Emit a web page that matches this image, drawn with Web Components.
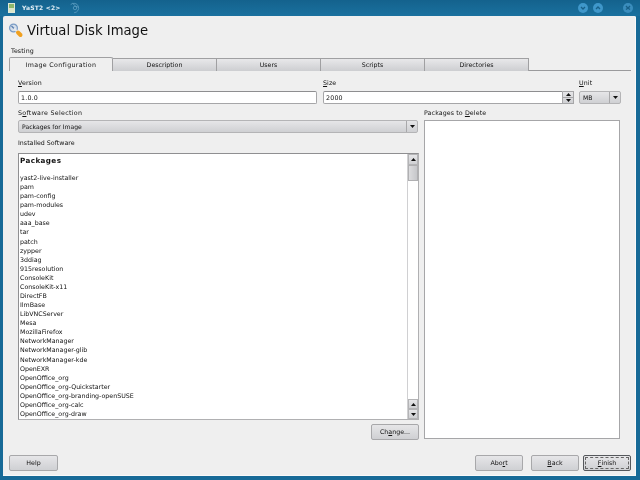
<!DOCTYPE html>
<html>
<head>
<meta charset="utf-8">
<title>YaST2</title>
<style>
html, body { margin: 0; padding: 0; width: 640px; height: 480px; overflow: hidden; background: #176a97; }
body { font-family: "DejaVu Sans", sans-serif; font-size: 6.3px; color: #222; }
u { text-underline-offset: 1px; }
.testing { margin: 1px 0 -1px 2px; }
</style>
</head>
<body>

<yast-window title="YaST2 <2>">
  <yast-heading>Virtual Disk Image</yast-heading>
  <yast-label class="testing">Testing</yast-label>
  <yast-tabs active="0" labels="Image Configuration|Description|Users|Scripts|Directories"></yast-tabs>
  <yast-form></yast-form>
  <yast-buttons></yast-buttons>
</yast-window>

<script>
const BTN_BG = 'linear-gradient(#e6e6e8, #cfd0d3)';

class YastLabel extends HTMLElement {
    constructor() {
        super();
        this.attachShadow({ mode: 'open' });
        this.shadowRoot.innerHTML = `
      <style>
        :host { display: block; font: 6.3px/9px "DejaVu Sans", sans-serif; color: #111; letter-spacing: .1px; white-space: nowrap; }
      </style>
      <slot></slot>`;
    }
}
customElements.define('yast-label', YastLabel);

class YastHeading extends HTMLElement {
    constructor() {
        super();
        this.attachShadow({ mode: 'open' });
        this.shadowRoot.innerHTML = `
      <style>
        :host { display: flex; align-items: center; gap: 3px; height: 20px; margin-bottom: 5px; font: 13.2px/20px "DejaVu Sans", sans-serif; color: #111; white-space: nowrap; }
        svg { flex: none; }
        span { padding-top: 2px; }
      </style>
      <svg width="15" height="15" viewBox="0 0 15 15">
        <circle cx="4.5" cy="5" r="3.9" fill="#d5dfea" stroke="#7a9cc6" stroke-width="1.2"/>
        <path d="M2.5 3 L5 5.5" stroke="#5f83b4" stroke-width="1.4"/>
        <path d="M5 5.5 L9 9.5" stroke="#e4e8ee" stroke-width="2"/>
        <path d="M9 9.5 L11.5 12" stroke="#f0a020" stroke-width="4" stroke-linecap="round"/>
      </svg>
      <span><slot></slot></span>`;
    }
}
customElements.define('yast-heading', YastHeading);

class YastWindow extends HTMLElement {
    constructor() {
        super();
        this.attachShadow({ mode: 'open' });
        this.shadowRoot.innerHTML = `
      <style>
        :host { display: flex; flex-direction: column; width: 640px; height: 480px; box-sizing: border-box; background: #176a97; padding: 0 4px 4px 3px; filter: blur(.3px); }
        .bar { flex: none; height: 16px; display: flex; align-items: center; color: #e4f0f7; font: bold 6px/16px "DejaVu Sans", sans-serif; letter-spacing: .2px; margin: 0 -4px 0 -3px; padding: 0 7px 0 8px; background: linear-gradient(#14628d, #1a719f); }
        .app { width: 7px; height: 10px; margin-right: 7px; background: linear-gradient(#8fb86c 45%, #dbe6c8 45%); border: 1px solid #dfe8d8; box-sizing: border-box; }
        .title { margin-right: 8px; }
        .pin { margin-top: -1px; }
        .sp { flex: 1; }
        .ctl { width: 10px; height: 10px; border-radius: 50%; background: #3f97ca; display: flex; align-items: center; justify-content: center; }
        .ctl svg { display: block; }
        .min { margin-right: 5px; }
        .max { margin-right: 20px; }
        .close { background: #3a8dbd; }
        .body { flex: 1; min-height: 0; background: #efefef; display: flex; flex-direction: column; box-sizing: border-box; padding: 4px 5px 5px 6px; border-radius: 2px 2px 0 0; border-bottom: 0; box-shadow: inset 0 -1px 0 #f9f9f9, inset -1px 0 0 #f9f9f9; }
      </style>
      <div class="bar">
        <span class="app"></span>
        <span class="title"></span>
        <svg class="pin" width="12" height="12" viewBox="0 0 14 14" fill="none" stroke="#5a9cc0" stroke-width="1"><path d="M2 3 A5.5 5.5 0 1 1 6 12.5"/><path d="M4 1.5 L8 5 L11 6"/><circle cx="7" cy="7" r="2"/></svg>
        <span class="sp"></span>
        <span class="ctl min"><svg width="6" height="6" viewBox="0 0 6 6"><path d="M1 2 L3 4 L5 2" fill="none" stroke="#175f88" stroke-width="1.3"/></svg></span>
        <span class="ctl max"><svg width="6" height="6" viewBox="0 0 6 6"><path d="M1 4 L3 2 L5 4" fill="none" stroke="#175f88" stroke-width="1.3"/></svg></span>
        <span class="ctl close"><svg width="6" height="6" viewBox="0 0 6 6"><path d="M1 1 L3 3.2 L5 1 M1 4.6 L3 3 L5 4.6" fill="none" stroke="#175f88" stroke-width="1.3"/></svg></span>
      </div>
      <div class="body"><slot></slot></div>`;
        this.shadowRoot.querySelector('.title').textContent = this.getAttribute('title');
    }
}
customElements.define('yast-window', YastWindow);

class YastTabs extends HTMLElement {
    constructor() {
        super();
        this.attachShadow({ mode: 'open' });
        this.shadowRoot.innerHTML = `
      <style>
        :host { display: flex; flex: none; height: 14px; margin: 3px 0 0 0; box-sizing: border-box; border-bottom: 1px solid #9a9a9c; font: 6.3px/12px "DejaVu Sans", sans-serif; color: #111; }
        .tab { width: 104px; box-sizing: border-box; height: 13px; margin-top: 1px; text-align: center; background: linear-gradient(#e8e8ea, #cdced1); border: 1px solid #a0a0a2; border-left: 0; border-bottom: 0; white-space: nowrap; }
        .tab.on { background: #efefef; height: 14px; margin-top: 0; border-left: 1px solid #a0a0a2; border-radius: 2px 2px 0 0; position: relative; z-index: 1; letter-spacing: .33px; line-height: 13px; }
      </style>`;
        const active = +this.getAttribute('active');
        this.getAttribute('labels').split('|').forEach((l, i) => {
            const d = document.createElement('div');
            d.className = 'tab' + (i === active ? ' on' : '');
            d.textContent = l;
            this.shadowRoot.appendChild(d);
        });
    }
}
customElements.define('yast-tabs', YastTabs);

class YastInput extends HTMLElement {
    constructor() {
        super();
        this.attachShadow({ mode: 'open' });
        this.shadowRoot.innerHTML = `
      <style>
        :host { display: block; height: 13px; box-sizing: border-box; background: #fff; border: 1px solid #a6a6a8; border-top-color: #8e8e90; border-radius: 2px; padding-left: 2px; font: 6.3px/11px "DejaVu Sans", sans-serif; letter-spacing: .2px; color: #111; }
      </style>
      <slot></slot>`;
    }
}
customElements.define('yast-input', YastInput);

const ARROW_UP = '<svg width="5" height="3" viewBox="0 0 5 3"><path d="M2.5 0 L5 3 L0 3Z" fill="#111"/></svg>';
const ARROW_DOWN = '<svg width="5" height="3" viewBox="0 0 5 3"><path d="M0 0 L5 0 L2.5 3Z" fill="#111"/></svg>';

class YastCombo extends HTMLElement {
    constructor() {
        super();
        this.attachShadow({ mode: 'open' });
        this.shadowRoot.innerHTML = `
      <style>
        :host { display: flex; box-sizing: border-box; height: 13px; border: 1px solid #b4b4b6; border-radius: 2px; background: ${BTN_BG}; font: 6.1px/11px "DejaVu Sans", sans-serif; color: #111; }
        .txt { flex: 1; padding-left: 3px; white-space: nowrap; }
        .arrow { flex: none; width: 10px; border-left: 1px solid #a8a8aa; display: flex; align-items: center; justify-content: center; }
      </style>
      <div class="txt"><slot></slot></div>
      <div class="arrow">${ARROW_DOWN}</div>`;
    }
}
customElements.define('yast-combo', YastCombo);

class YastSpin extends HTMLElement {
    constructor() {
        super();
        this.attachShadow({ mode: 'open' });
        this.shadowRoot.innerHTML = `
      <style>
        :host { display: flex; height: 13px; }
        yast-input { flex: 1; border-radius: 2px 0 0 2px; }
        .btns { flex: none; width: 11px; display: flex; flex-direction: column; box-sizing: border-box; border: 1px solid #a6a6a8; border-left: 0; background: ${BTN_BG}; }
        .btns div { flex: 1; display: flex; align-items: center; justify-content: center; }
        .btns div + div { border-top: 1px solid #a6a6a8; }
      </style>
      <yast-input><slot></slot></yast-input>
      <div class="btns"><div>${ARROW_UP}</div><div>${ARROW_DOWN}</div></div>`;
    }
}
customElements.define('yast-spin', YastSpin);

class YastScrollbar extends HTMLElement {
    constructor() {
        super();
        this.attachShadow({ mode: 'open' });
        this.shadowRoot.innerHTML = `
      <style>
        :host { display: flex; flex-direction: column; flex: none; width: 11px; background: #fff; border-left: 1px solid #d0d0d2; box-sizing: border-box; }
        .b { flex: none; height: 10px; background: ${BTN_BG}; display: flex; align-items: center; justify-content: center; border: 1px solid #b4b4b6; box-sizing: border-box; }
        .thumb { flex: none; height: 16px; background: linear-gradient(90deg, #dcdcde, #c6c7ca); border: 1px solid #b0b0b2; box-sizing: border-box; }
        .track { flex: 1; }
        .first { height: 11px; }
      </style>
      <div class="b first">${ARROW_UP}</div>
      <div class="thumb"></div>
      <div class="track"></div>
      <div class="b">${ARROW_UP}</div>
      <div class="b">${ARROW_DOWN}</div>`;
    }
}
customElements.define('yast-scrollbar', YastScrollbar);

class YastList extends HTMLElement {
    constructor() {
        super();
        this.attachShadow({ mode: 'open' });
        this.shadowRoot.innerHTML = `
      <style>
        :host { display: flex; box-sizing: border-box; background: #fff; border: 1px solid #8f8f91; border-right-color: #b0b0b2; border-bottom-color: #b0b0b2; overflow: hidden; }
        .col { flex: 1; min-width: 0; padding: 1px 0 0 1px; overflow: hidden; }
        .head { font: bold 7.2px/11px "DejaVu Sans", sans-serif; letter-spacing: .4px; color: #111; margin-bottom: 7px; }
        .row { font: 6.3px/9.08px "DejaVu Sans", sans-serif; color: #111; white-space: nowrap; }
      </style>
      <div class="col"><div class="head"></div><div class="rows"></div></div>
      <yast-scrollbar></yast-scrollbar>`;
        this.shadowRoot.querySelector('.head').textContent = this.getAttribute('heading');
        const rows = this.shadowRoot.querySelector('.rows');
        this.getAttribute('items').split(' ').forEach(i => {
            const d = document.createElement('div');
            d.className = 'row';
            d.textContent = i;
            rows.appendChild(d);
        });
    }
}
customElements.define('yast-list', YastList);

class YastButton extends HTMLElement {
    constructor() {
        super();
        this.attachShadow({ mode: 'open' });
        this.shadowRoot.innerHTML = `
      <style>
        :host { display: flex; align-items: center; justify-content: center; box-sizing: border-box; width: 48px; height: 16px; background: ${BTN_BG}; border: 1px solid #a8a8aa; border-radius: 2px; font: 6.3px/1 "DejaVu Sans", sans-serif; color: #111; white-space: nowrap; }
        :host([focused]) { border-color: #55585c; outline: 1px dashed #666; outline-offset: -3px; }
      </style>
      <slot></slot>`;
    }
}
customElements.define('yast-button', YastButton);

class YastForm extends HTMLElement {
    constructor() {
        super();
        this.attachShadow({ mode: 'open' });
        this.shadowRoot.innerHTML = `
      <style>
        :host { display: grid; flex: 1; min-height: 0; grid-template-columns: 400px 6px 196px; grid-template-rows: auto 1fr; padding: 8px 0 0 9px; box-sizing: border-box; }
        .top { grid-column: 1 / 4; display: grid; grid-template-columns: 305px 256px 42px; grid-template-rows: 8px 13px; row-gap: 4px; margin-right: -1px; }
        .top yast-label { line-height: 8px; }
        .top yast-input { margin-right: 6px; }
        .top yast-spin { margin-right: 5px; }
        .left { grid-column: 1; display: flex; flex-direction: column; margin-top: 5px; }
        .right { grid-column: 3; display: flex; flex-direction: column; margin-top: 5px; }
        .left yast-label, .right yast-label { line-height: 8px; margin-bottom: 3px; }
        .soft { letter-spacing: .3px; }
        .left .installed { line-height: 9px; margin-top: 5px; margin-bottom: 6px; letter-spacing: 0; }
        yast-list { height: 267px; margin-right: -1px; }
        .change { display: flex; justify-content: flex-end; margin-top: 4px; margin-right: -1px; }
        .del { height: 319px; box-sizing: border-box; background: #fff; border: 1px solid #a6a6a8; }
        u { text-underline-offset: 1px; }
      </style>
      <div class="top">
        <yast-label><u>V</u>ersion</yast-label>
        <yast-label><u>S</u>ize</yast-label>
        <yast-label><u>U</u>nit</yast-label>
        <yast-input>1.0.0</yast-input>
        <yast-spin>2000</yast-spin>
        <yast-combo>MB</yast-combo>
      </div>
      <div class="left">
        <yast-label class="soft">S<u>o</u>ftware Selection</yast-label>
        <yast-combo>Packages for Image</yast-combo>
        <yast-label class="installed">Installed Software</yast-label>
        <yast-list heading="Packages" items="yast2-live-installer pam pam-config pam-modules udev aaa_base tar patch zypper 3ddiag 915resolution ConsoleKit ConsoleKit-x11 DirectFB IlmBase LibVNCServer Mesa MozillaFirefox NetworkManager NetworkManager-glib NetworkManager-kde OpenEXR OpenOffice_org OpenOffice_org-Quickstarter OpenOffice_org-branding-openSUSE OpenOffice_org-calc OpenOffice_org-draw"></yast-list>
        <div class="change"><yast-button>Ch<u>a</u>nge...</yast-button></div>
      </div>
      <div class="right">
        <yast-label>Packages to <u>D</u>elete</yast-label>
        <div class="del"></div>
      </div>`;
    }
}
customElements.define('yast-form', YastForm);

class YastButtons extends HTMLElement {
    constructor() {
        super();
        this.attachShadow({ mode: 'open' });
        this.shadowRoot.innerHTML = `
      <style>
        :host { display: flex; flex: none; height: 16px; }
        u { text-underline-offset: 1px; }
        .sp { flex: 1; }
        .help { width: 49px; }
        .back { margin: 0 4px 0 8px; }
      </style>
      <yast-button class="help">Help</yast-button>
      <span class="sp"></span>
      <yast-button>Abo<u>r</u>t</yast-button>
      <yast-button class="back"><u>B</u>ack</yast-button>
      <yast-button focused><u>F</u>inish</yast-button>`;
    }
}
customElements.define('yast-buttons', YastButtons);
</script>
</body>
</html>
